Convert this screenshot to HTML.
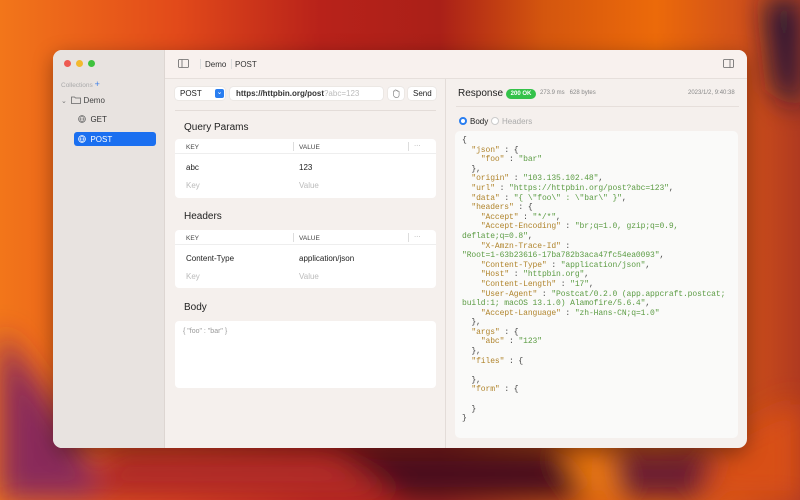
<!DOCTYPE html>
<html><head><meta charset="utf-8"><style>
*{box-sizing:border-box;margin:0;padding:0}
body{width:800px;height:500px;overflow:hidden;position:relative;font-family:"Liberation Sans",sans-serif;background:#c03018}
.bg{position:absolute;inset:0}
.win{position:absolute;left:53px;top:50px;width:694px;height:398px;border-radius:9px;overflow:hidden;background:#f5f0ed;box-shadow:0 6px 20px rgba(0,0,0,.35)}
.side{position:absolute;left:0;top:0;width:112px;height:100%;background:#e8e3e0;border-right:1px solid #ddd6d2}
.a{position:absolute}
.dot{position:absolute;top:10px;width:7px;height:7px;border-radius:50%}
.t{font-size:8px;color:#222}
.card{position:absolute;background:#fff;border-radius:4px}
.code{position:absolute;left:455px;top:131px;width:283px;height:307px;background:#fafaf9;border-radius:5px}
pre{position:absolute;left:462px;top:136px;font-family:"Liberation Mono",monospace;font-size:8px;letter-spacing:-0.1px;line-height:9.6px;color:#444}
.k{color:#b0842c}.s{color:#5c9c44}
.hd{font-size:6.5px;color:#444}
.ph{color:#bbb}
</style></head><body>
<svg class="bg" width="800" height="500" viewBox="0 0 800 500">
<defs>
<linearGradient id="g" x1="0" x2="1" y1="0" y2="0">
<stop offset="0" stop-color="#f2761a"/><stop offset=".22" stop-color="#e24a1a"/><stop offset=".4" stop-color="#b8221a"/><stop offset=".55" stop-color="#aa2018"/><stop offset=".68" stop-color="#d4560e"/><stop offset=".82" stop-color="#ec6a0a"/><stop offset=".93" stop-color="#d0501a"/><stop offset="1" stop-color="#b03a20"/>
</linearGradient>
<filter id="b"><feGaussianBlur stdDeviation="14"/></filter>
</defs>
<rect width="800" height="500" fill="url(#g)"/>
<g filter="url(#b)">
<path d="M0 330 C40 380 80 440 110 500 L0 500Z" fill="#8a2a5a"/>
<path d="M110 448 L330 448 L420 500 L90 500Z" fill="#b02a28"/>
<path d="M330 448 L560 448 L600 500 L400 500Z" fill="#4a0c1e"/>
<path d="M560 448 L610 448 L620 500 L590 500Z" fill="#f07a10"/>
<path d="M610 448 L720 448 L700 500 L620 500Z" fill="#6a1a30"/>
<path d="M720 440 L800 400 L800 500 L700 500Z" fill="#d85018"/>
<path d="M765 0 L800 0 L800 110 L775 90Z" fill="#1a1838"/>
</g>
</svg>
<div class="win">
<div class="side">
<div class="dot" style="left:11px;background:#ee5a52"></div>
<div class="dot" style="left:23px;background:#f3b92e"></div>
<div class="dot" style="left:35px;background:#3fc23d"></div>
<div class="a" style="left:8px;top:29px;font-size:6.5px;color:#aaa">Collections <span style="color:#3a7de8;font-size:9px">+</span></div>
<div class="a t" style="left:8px;top:46px;color:#444"><span style="font-size:7px;color:#777">⌄</span>&nbsp;&nbsp;<svg width="10" height="8" viewBox="0 0 10 8" style="vertical-align:-1px"><path d="M.5 1h3l1 1h5v5.5h-9z" fill="none" stroke="#666" stroke-width=".8"/></svg>&nbsp;Demo</div>
<div class="a t" style="left:25px;top:65px;color:#333"><svg width="8" height="8" viewBox="0 0 8 8" style="vertical-align:-1px"><circle cx="4" cy="4" r="3.4" fill="none" stroke="#666" stroke-width=".8"/><path d="M.6 4h6.8M4 .6c-2 2-2 4.8 0 6.8M4 .6c2 2 2 4.8 0 6.8" fill="none" stroke="#666" stroke-width=".6"/></svg>&nbsp;&nbsp;GET</div>
<div class="a" style="left:21px;top:82px;width:82px;height:14px;border-radius:3px;background:#1a6ff0"></div>
<div class="a t" style="left:25px;top:85px;color:#fff"><svg width="8" height="8" viewBox="0 0 8 8" style="vertical-align:-1px"><circle cx="4" cy="4" r="3.4" fill="none" stroke="#fff" stroke-width=".8"/><path d="M.6 4h6.8M4 .6c-2 2-2 4.8 0 6.8M4 .6c2 2 2 4.8 0 6.8" fill="none" stroke="#fff" stroke-width=".6"/></svg>&nbsp;&nbsp;POST</div>
</div>
<div class="a" style="left:112px;top:0;width:582px;height:29px;background:#f8f1ee;border-bottom:1px solid #e6dfdb"></div>
<svg class="a" style="left:125px;top:9px" width="11" height="9" viewBox="0 0 11 9"><rect x=".5" y=".5" width="10" height="8" rx="1" fill="none" stroke="#666" stroke-width=".8"/><path d="M4 .5v8" stroke="#666" stroke-width=".8"/></svg>
<div class="a" style="left:147px;top:9px;width:1px;height:10px;background:#ddd"></div>
<div class="a t" style="left:152px;top:10px;color:#333">Demo</div>
<div class="a" style="left:178px;top:9px;width:1px;height:10px;background:#ddd"></div>
<div class="a t" style="left:182px;top:10px;color:#333">POST</div>
<svg class="a" style="left:670px;top:9px" width="11" height="9" viewBox="0 0 11 9"><rect x=".5" y=".5" width="10" height="8" rx="1" fill="none" stroke="#666" stroke-width=".8"/><path d="M7 .5v8" stroke="#666" stroke-width=".8"/></svg>
<div class="a" style="left:392px;top:29px;width:1px;height:369px;background:#e3dcd8"></div>
<div class="a" style="left:122px;top:37px;width:50px;height:13px;background:#fff;border-radius:3px;box-shadow:0 0 1px #bbb"></div>
<div class="a t" style="left:127px;top:39px">POST</div>
<div class="a" style="left:162px;top:39px;width:9px;height:9px;background:#2a7ef0;border-radius:2px;color:#fff;font-size:7px;text-align:center;line-height:8px">⌄</div>
<div class="a" style="left:177px;top:37px;width:153px;height:13px;background:#fff;border-radius:3px;box-shadow:0 0 1px #bbb"></div>
<div class="a t" style="left:183px;top:39px;font-weight:bold;color:#333">https://httpbin.org/post<span style="font-weight:normal;color:#bbb">?abc=123</span></div>
<div class="a" style="left:335px;top:37px;width:16px;height:13px;background:#fff;border-radius:3px;box-shadow:0 0 1px #bbb"></div>
<svg class="a" style="left:339px;top:39px" width="8" height="9" viewBox="0 0 8 9"><path d="M1.5 4V2.5a.7.7 0 0 1 1.4 0V1.5a.7.7 0 0 1 1.4 0v.5a.7.7 0 0 1 1.4 0v.8a.7.7 0 0 1 1.4 0V6c0 1.5-1 2.5-2.5 2.5S1.5 7.5 1.5 6z" fill="none" stroke="#888" stroke-width=".7"/></svg>
<div class="a" style="left:355px;top:37px;width:28px;height:13px;background:#fff;border-radius:3px;box-shadow:0 0 1px #bbb"></div>
<div class="a t" style="left:360px;top:39px">Send</div>
<div class="a" style="left:122px;top:60px;width:261px;height:1px;background:#e3dcd8"></div>
<div class="a" style="left:131px;top:72px;font-size:10px;color:#222">Query Params</div>
<div class="card" style="left:122px;top:89px;width:261px;height:59px"></div>
<div class="a" style="left:122px;top:103px;width:261px;height:1px;background:#eee"></div>
<div class="a hd" style="left:133px;top:94px">KEY</div><div class="a" style="left:240px;top:92px;width:1px;height:9px;background:#ddd"></div>
<div class="a hd" style="left:246px;top:94px">VALUE</div><div class="a" style="left:355px;top:92px;width:1px;height:9px;background:#ddd"></div>
<div class="a hd" style="left:361px;top:92px;color:#888">···</div>
<div class="a t" style="left:133px;top:113px">abc</div><div class="a t" style="left:246px;top:113px">123</div>
<div class="a t ph" style="left:133px;top:131px">Key</div><div class="a t ph" style="left:246px;top:131px">Value</div>
<div class="a" style="left:131px;top:161px;font-size:10px;color:#222">Headers</div>
<div class="card" style="left:122px;top:180px;width:261px;height:58px"></div>
<div class="a" style="left:122px;top:194px;width:261px;height:1px;background:#eee"></div>
<div class="a hd" style="left:133px;top:185px">KEY</div><div class="a" style="left:240px;top:183px;width:1px;height:9px;background:#ddd"></div>
<div class="a hd" style="left:246px;top:185px">VALUE</div><div class="a" style="left:355px;top:183px;width:1px;height:9px;background:#ddd"></div>
<div class="a hd" style="left:361px;top:183px;color:#888">···</div>
<div class="a t" style="left:133px;top:204px">Content-Type</div><div class="a t" style="left:246px;top:204px">application/json</div>
<div class="a t ph" style="left:133px;top:222px">Key</div><div class="a t ph" style="left:246px;top:222px">Value</div>
<div class="a" style="left:131px;top:252px;font-size:10px;color:#222">Body</div>
<div class="card" style="left:122px;top:271px;width:261px;height:67px"></div>
<div class="a" style="left:130px;top:278px;font-size:7px;color:#999">{ "foo" : "bar" }</div>
<div class="a" style="left:405px;top:38px;font-size:10px;color:#222">Response</div>
<div class="a" style="left:453px;top:39px;width:30px;height:10px;background:#34c24a;border-radius:5px;color:#fff;font-size:6px;font-weight:bold;text-align:center;line-height:10px">200 OK</div>
<div class="a" style="left:487px;top:40px;font-size:6px;color:#888">273.9 ms&nbsp;&nbsp;&nbsp;628 bytes</div>
<div class="a" style="left:635px;top:40px;font-size:6px;color:#888">2023/1/2, 9:40:38</div>
<div class="a" style="left:403px;top:56px;width:283px;height:1px;background:#e6dfdb"></div>
<div class="a" style="left:406px;top:67px;width:8px;height:8px;border-radius:50%;border:2.5px solid #2a7ef0;background:#fff"></div>
<div class="a t" style="left:417px;top:67px">Body</div>
<div class="a" style="left:438px;top:67px;width:8px;height:8px;border-radius:50%;border:1px solid #ccc;background:#fff"></div>
<div class="a t" style="left:449px;top:67px;color:#aaa">Headers</div>
</div>
<div class="code"></div>
<pre>{
  <span class="k">"json"</span> : {
    <span class="k">"foo"</span> : <span class="s">"bar"</span>
  },
  <span class="k">"origin"</span> : <span class="s">"103.135.102.48"</span>,
  <span class="k">"url"</span> : <span class="s">"https://httpbin.org/post?abc=123"</span>,
  <span class="k">"data"</span> : <span class="s">"{ \"foo\" : \"bar\" }"</span>,
  <span class="k">"headers"</span> : {
    <span class="k">"Accept"</span> : <span class="s">"*/*"</span>,
    <span class="k">"Accept-Encoding"</span> : <span class="s">"br;q=1.0, gzip;q=0.9,
deflate;q=0.8"</span>,
    <span class="k">"X-Amzn-Trace-Id"</span> :
<span class="s">"Root=1-63b23616-17ba782b3aca47fc54ea0093"</span>,
    <span class="k">"Content-Type"</span> : <span class="s">"application/json"</span>,
    <span class="k">"Host"</span> : <span class="s">"httpbin.org"</span>,
    <span class="k">"Content-Length"</span> : <span class="s">"17"</span>,
    <span class="k">"User-Agent"</span> : <span class="s">"Postcat/0.2.0 (app.appcraft.postcat;
build:1; macOS 13.1.0) Alamofire/5.6.4"</span>,
    <span class="k">"Accept-Language"</span> : <span class="s">"zh-Hans-CN;q=1.0"</span>
  },
  <span class="k">"args"</span> : {
    <span class="k">"abc"</span> : <span class="s">"123"</span>
  },
  <span class="k">"files"</span> : {

  },
  <span class="k">"form"</span> : {

  }
}</pre>
</body></html>
